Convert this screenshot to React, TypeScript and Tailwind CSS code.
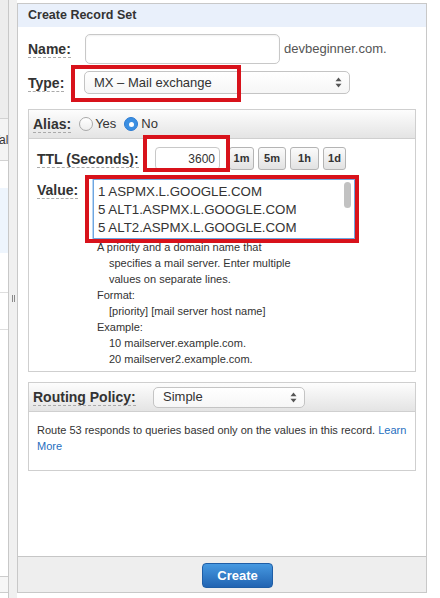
import React from 'react';

const Label: React.FC<{ children: React.ReactNode }> = ({ children }) => (
  <span className="text-[14px] font-bold text-[#333] leading-[16px] border-b border-dashed border-[#aaa] whitespace-nowrap">
    {children}
  </span>
);

const SelectArrows = () => (
  <svg width="7" height="11" viewBox="0 0 7 11">
    <path d="M3.5 0.5 L6.5 4.2 H0.5 Z" fill="#555" />
    <path d="M3.5 10.5 L6.5 6.8 H0.5 Z" fill="#555" />
  </svg>
);

const Select: React.FC<{ value: string; className: string }> = ({ value, className }) => (
  <div
    className={`flex items-center justify-between pl-[9px] pr-[7px] border border-[#c4c4c4] rounded-[5px] bg-gradient-to-b from-white to-[#f6f6f6] text-[13px] text-[#333] ${className}`}
  >
    <span>{value}</span>
    <SelectArrows />
  </div>
);

const TimeButton: React.FC<{ label: string; w: string }> = ({ label, w }) => (
  <div
    className={`${w} h-[23px] flex items-center justify-center border border-[#b4b4b4] rounded-[3px] bg-gradient-to-b from-[#fbfbfb] to-[#e2e2e2] text-[11px] font-bold text-[#333]`}
  >
    {label}
  </div>
);

const helpLines: { text: string; indent: boolean }[] = [
  { text: 'A priority and a domain name that', indent: false },
  { text: 'specifies a mail server. Enter multiple', indent: true },
  { text: 'values on separate lines.', indent: true },
  { text: 'Format:', indent: false },
  { text: '[priority] [mail server host name]', indent: true },
  { text: 'Example:', indent: false },
  { text: '10 mailserver.example.com.', indent: true },
  { text: '20 mailserver2.example.com.', indent: true },
];

export default function App() {
  return (
    <div className="relative w-[440px] h-[598px] bg-white flex overflow-hidden font-['Liberation_Sans',Arial,sans-serif] text-[#333]">
      {/* left list, mostly hidden behind the panel */}
      <div className="w-[9px] border-r border-[#c8c8c8] flex flex-col overflow-hidden">
        <div className="h-[119px] bg-[#ededed] border-b border-[#d2d2d2]" />
        <div className="h-[42px] bg-[#f4f4f4] border-b border-[#d2d2d2] flex items-center">
          <span className="ml-[-8px] text-[12px] whitespace-nowrap">Value</span>
        </div>
        <div className="h-[27px]" />
        <div className="h-[65px] bg-[#eef5fd]" />
        <div className="h-[40px] border-b border-[#dedede]" />
        <div className="h-[37px] border-b border-[#dedede]" />
        <div className="flex-1" />
        <div className="h-[17px] bg-[#f6f6f6] border-t border-b border-[#cccccc]" />
        <div className="h-[5px]" />
      </div>

      {/* splitter */}
      <div className="w-[8px] bg-[#f0f0f0] flex justify-center gap-[1px] pt-[295px]">
        <div className="w-px h-[7px] bg-[#8a8a8a]" />
        <div className="w-px h-[7px] bg-[#8a8a8a]" />
      </div>

      {/* main panel */}
      <div className="mt-[3px] w-[410px] h-[590px] border border-[#c8c8c8] flex flex-col">
        <div className="h-[23px] bg-[#e9f0fb] pl-[10px] flex items-center text-[12.5px] font-bold text-[#333]">
          Create Record Set
        </div>

        <div className="flex-1 flex flex-col pl-[10px]">
          <div className="mt-[7px] h-[30px] flex items-center">
            <div className="w-[57px]">
              <Label>Name:</Label>
            </div>
            <div className="w-[195px] h-[30px] border border-[#c8c8c8] rounded-[5px] bg-white shadow-[inset_0_1px_2px_rgba(0,0,0,0.06)]" />
            <span className="ml-[4px] text-[13px] text-[#555]">devbeginner.com.</span>
          </div>

          <div className="mt-[7px] h-[23px] flex items-center">
            <div className="w-[56px]">
              <Label>Type:</Label>
            </div>
            <Select value="MX – Mail exchange" className="w-[266px] h-[23px]" />
          </div>

          {/* alias panel */}
          <div className="mt-[15px] w-[388px] h-[263px] border border-[#cfcfcf] flex flex-col">
            <div className="h-[29px] border-b border-[#cfcfcf] bg-gradient-to-b from-[#fdfdfd] to-[#e4e4e4] flex items-center pl-[4px]">
              <Label>Alias:</Label>
              <div className="ml-[8px] w-[14px] h-[14px] rounded-full border border-[#a9a9a9] bg-gradient-to-b from-white to-[#eeeeee]" />
              <span className="ml-[2px] text-[13px]">Yes</span>
              <div className="ml-[8px] w-[14px] h-[14px] rounded-full bg-[#3b8fe2] border border-[#2c7bd2] flex items-center justify-center">
                <div className="w-[5px] h-[5px] rounded-full bg-white" />
              </div>
              <span className="ml-[3px] text-[13px]">No</span>
            </div>

            <div className="flex flex-col pl-[8px] pt-[8px]">
              <div className="h-[23px] flex items-center">
                <div className="w-[118px]">
                  <Label>TTL (Seconds):</Label>
                </div>
                <div className="w-[65px] h-[23px] border border-[#c8c8c8] rounded-[4px] flex items-center justify-end pr-[4px] text-[12px] text-[#333]">
                  3600
                </div>
                <div className="ml-[9px] flex gap-[4px]">
                  <TimeButton label="1m" w="w-[25px]" />
                  <TimeButton label="5m" w="w-[28px]" />
                  <TimeButton label="1h" w="w-[29px]" />
                  <TimeButton label="1d" w="w-[23px]" />
                </div>
              </div>

              <div className="mt-[9px] flex items-start">
                <div className="w-[56px] -mt-[1px]">
                  <Label>Value:</Label>
                </div>
                <div className="w-[262px] h-[60px] border border-[#6ea6e0] shadow-[0_0_0_1px_#b9d6f4] flex overflow-hidden bg-white">
                  <div className="flex-1 pl-[4px] pt-[3px] text-[13.3px] leading-[18px] text-[#333] whitespace-nowrap overflow-hidden">
                    <div>1 ASPMX.L.GOOGLE.COM</div>
                    <div>5 ALT1.ASPMX.L.GOOGLE.COM</div>
                    <div>5 ALT2.ASPMX.L.GOOGLE.COM</div>
                  </div>
                  <div className="w-[14px] flex justify-center pt-[2px]">
                    <div className="w-[7px] h-[26px] rounded-full bg-[#c2c2c2]" />
                  </div>
                </div>
              </div>

              <div className="ml-[60px] text-[11px] leading-[16px] text-[#333]">
                {helpLines.map((l, i) => (
                  <div key={i} className={l.indent ? 'pl-[12px]' : ''}>
                    {l.text}
                  </div>
                ))}
              </div>
            </div>
          </div>

          {/* routing panel */}
          <div className="mt-[10px] w-[388px] h-[89px] border border-[#cfcfcf] flex flex-col">
            <div className="h-[29px] border-b border-[#cfcfcf] bg-gradient-to-b from-[#fdfdfd] to-[#e4e4e4] flex items-center pl-[4px]">
              <div className="w-[120px]">
                <Label>Routing Policy:</Label>
              </div>
              <Select value="Simple" className="w-[152px] h-[21px]" />
            </div>
            <div className="px-[8px] pt-[10px] text-[11px] leading-[16px] text-[#333]">
              Route 53 responds to queries based only on the values in this record.{' '}
              <span className="text-[#1f6fc0]">Learn</span>
              <br />
              <span className="text-[#1f6fc0]">More</span>
            </div>
          </div>
        </div>

        <div className="h-[36px] border-t border-[#c6c6c6] bg-[#eeeeee] pl-[184px] pt-[6px]">
          <div className="w-[71px] h-[25px] rounded-[4px] bg-gradient-to-b from-[#4699e1] to-[#2264b2] border border-[#1f5ea6] flex items-center justify-center text-white font-bold text-[13px]">
            Create
          </div>
        </div>
      </div>

      {/* red annotation boxes */}
      <div className="absolute left-[71px] top-[65px] w-[170px] h-[37px] border-[4px] border-[#d8121b]" />
      <div className="absolute left-[143px] top-[135px] w-[87px] h-[37px] border-[4px] border-[#d8121b]" />
      <div className="absolute left-[85px] top-[175px] w-[274px] h-[68px] border-[4px] border-[#d8121b]" />
    </div>
  );
}
